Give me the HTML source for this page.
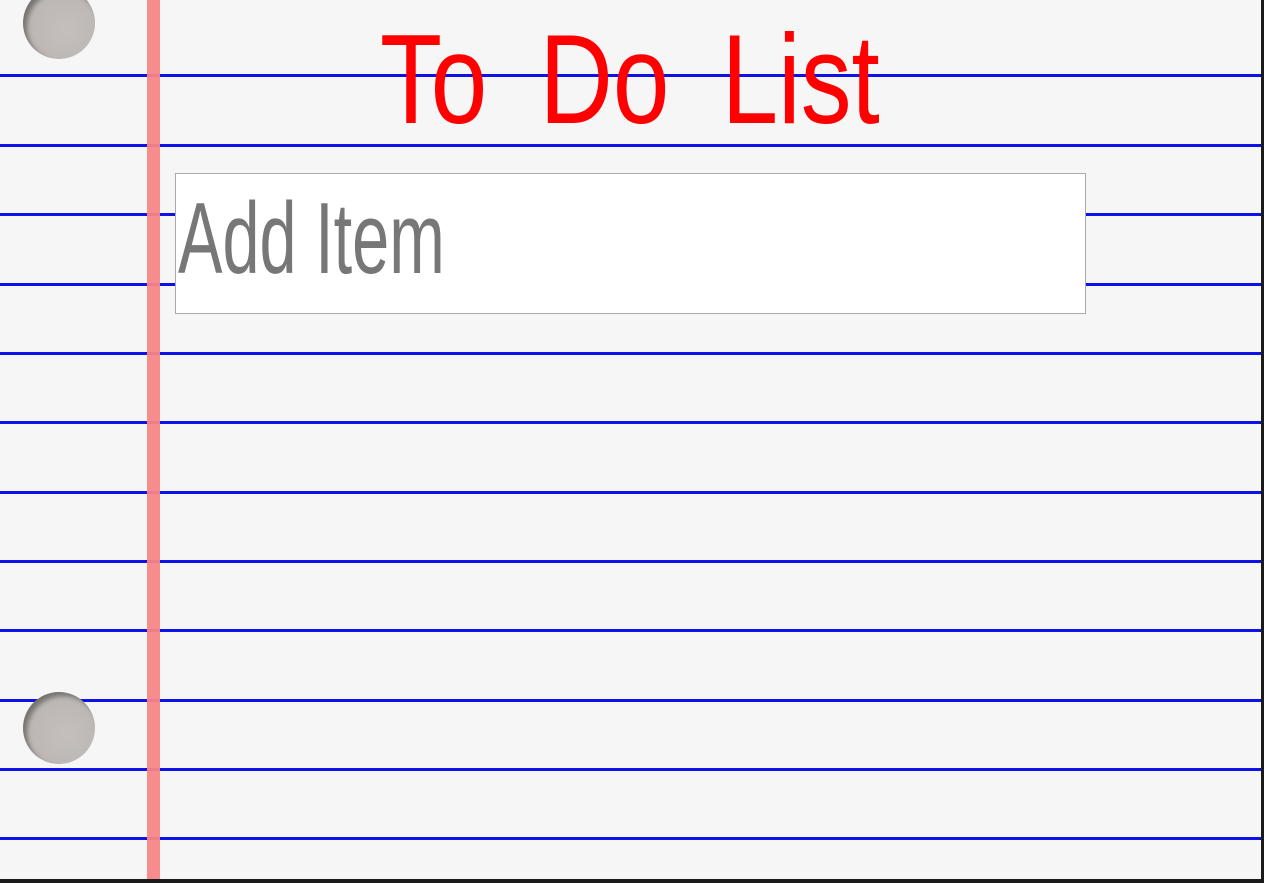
<!DOCTYPE html>
<html><head><meta charset="utf-8"><style>
html,body{margin:0;padding:0;}
body{width:1264px;height:883px;position:relative;overflow:hidden;background:#f7f6f7;font-family:"Liberation Sans",sans-serif;}
.line{position:absolute;left:0;width:1261px;height:3px;background:#1010e8;}
.margin{position:absolute;left:147px;top:0;width:13px;height:879px;background:#f78686;opacity:.95;}
.hole{position:absolute;width:72px;height:72px;border-radius:50%;background:radial-gradient(circle at 60% 60%,#c4bfbc 0%,#bcb7b4 60%,#a9a4a1 100%);box-shadow:inset 4px 4px 5px rgba(0,0,0,.35);}
.rb{position:absolute;left:1261px;top:0;width:3px;height:883px;background:#1a1a1a;}
.bb{position:absolute;left:0;top:879px;width:1264px;height:4px;background:#1a1a1a;}
.title{position:absolute;left:380px;top:16px;font-size:127px;color:#f00;line-height:1;white-space:nowrap;transform-origin:0 0;transform:scaleX(.8);word-spacing:30px;}
.box{position:absolute;left:175px;top:173px;width:909px;height:139px;background:#fff;border:1px solid #aaa;}
.ph{position:absolute;left:178px;top:189px;font-size:101px;color:#777;line-height:1;white-space:nowrap;transform-origin:0 0;transform:scaleX(.66);}
</style></head><body>
<div class="line" style="top:74px"></div>
<div class="line" style="top:144px"></div>
<div class="line" style="top:213px"></div>
<div class="line" style="top:283px"></div>
<div class="line" style="top:352px"></div>
<div class="line" style="top:421px"></div>
<div class="line" style="top:491px"></div>
<div class="line" style="top:560px"></div>
<div class="line" style="top:629px"></div>
<div class="line" style="top:699px"></div>
<div class="line" style="top:768px"></div>
<div class="line" style="top:837px"></div>
<div class="margin"></div>
<div class="hole" style="left:23px;top:-13px"></div>
<div class="hole" style="left:23px;top:692px"></div>
<div class="title">To Do List</div>
<div class="box"></div>
<div class="ph">Add Item</div>
<div class="rb"></div>
<div class="bb"></div>
</body></html>
